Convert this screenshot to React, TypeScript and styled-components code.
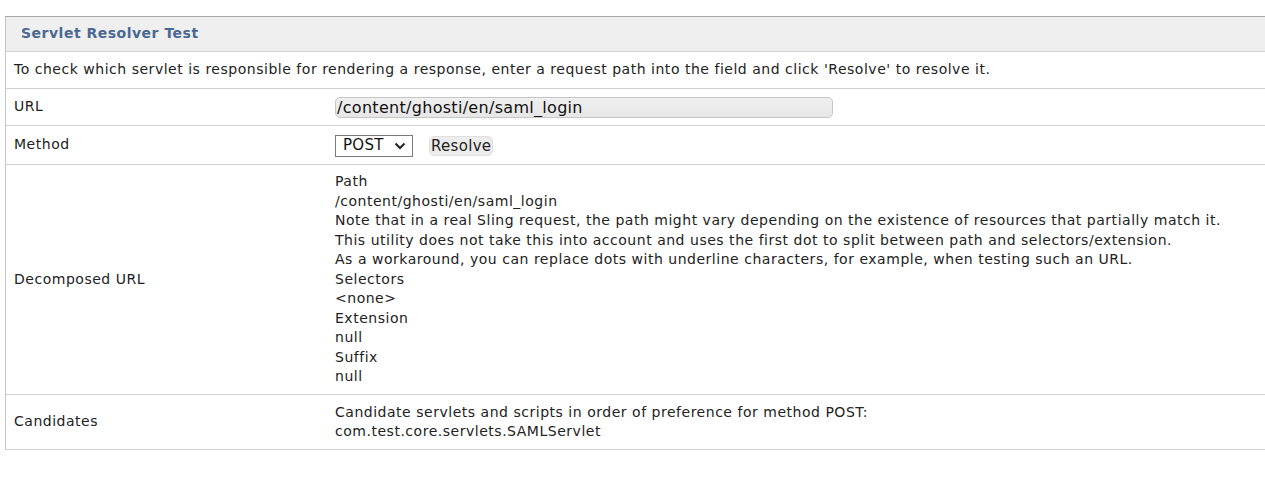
import React from 'react';
import styled, { createGlobalStyle } from 'styled-components';

const C = {
  text: '#222',
  title: '#4a6894',
  headBg: '#efefef',
  outer: '#aaaaaa',
  line: '#d0d0d0',
};

const Global = createGlobalStyle`
  html, body { margin:0; padding:0; background:#fff; }
  body { font-family:'DejaVu Sans',Verdana,sans-serif; color:${C.text}; }
`;

const Page = styled.div`
  padding:16px 0 0 5px;
`;
const Table = styled.table`
  width:1262px; border-collapse:collapse;
  border-top:1px solid ${C.outer}; border-left:1px solid #c4c4c4;
  font-size:14px; letter-spacing:0.52px; line-height:19.5px;
`;
const HeadCell = styled.th`
  background:${C.headBg}; color:${C.title}; text-align:left;
  font-size:14px; letter-spacing:0.5px; font-weight:bold; height:34px; padding:0 15px;
  border-bottom:1px solid ${C.line};
`;
const Row = styled.tr`
  border-bottom:1px solid ${C.line};
`;
const Label = styled.td<{ $h?: number }>`
  width:305px; padding:8px 8px; vertical-align:middle;
  height:${p => (p.$h ? `${p.$h}px` : 'auto')};
`;
const Value = styled.td<{ $top?: number }>`
  padding:${p => p.$top ?? 8}px 8px 7px 8px; vertical-align:middle;
`;
const Wide = styled.td`
  padding:8px 8px 8px; height:20px;
`;
const UrlInput = styled.input`
  box-sizing:border-box; width:498px; height:21px; padding:0 1px;
  font-family:'DejaVu Sans',Verdana,sans-serif; font-size:16px; letter-spacing:0.3px; color:#111;
  border:1px solid #c6c6c6; border-radius:5px;
  background:linear-gradient(#f0f0f0,#e6e6e6);
  outline:none; display:block;
`;
const Controls = styled.div`
  display:flex; align-items:center; gap:16px;
`;
const Select = styled.div`
  box-sizing:border-box; width:78px; height:22px; padding:0 6px 0 7px;
  display:flex; align-items:center; justify-content:space-between;
  border:1px solid #7a7a7a; background:#fff;
  font-size:15px; letter-spacing:0.3px; color:#111;
`;
const Button = styled.button`
  height:20px; padding:0 1px; font-family:'DejaVu Sans',Verdana,sans-serif;
  font-size:15px; letter-spacing:0.3px; color:#222; background:#ececec;
  border:1px solid #e0e0e0; border-radius:5px;
`;
const Lines = styled.div`
  display:flex; flex-direction:column;
`;

const decomposed = [
  'Path',
  '/content/ghosti/en/saml_login',
  'Note that in a real Sling request, the path might vary depending on the existence of resources that partially match it.',
  'This utility does not take this into account and uses the first dot to split between path and selectors/extension.',
  'As a workaround, you can replace dots with underline characters, for example, when testing such an URL.',
  'Selectors',
  '<none>',
  'Extension',
  'null',
  'Suffix',
  'null',
];

export default function App() {
  return (
    <Page>
      <Global />
      <Table>
        <thead>
          <tr><HeadCell colSpan={2}>Servlet Resolver Test</HeadCell></tr>
        </thead>
        <tbody>
          <Row>
            <Wide colSpan={2}>
              To check which servlet is responsible for rendering a response, enter a request path into the field and click 'Resolve' to resolve it.
            </Wide>
          </Row>
          <Row>
            <Label $h={16}>URL</Label>
            <Value><UrlInput defaultValue="/content/ghosti/en/saml_login" /></Value>
          </Row>
          <Row>
            <Label $h={22}>Method</Label>
            <Value>
              <Controls>
                <Select>
                  POST
                  <svg width="12" height="8" viewBox="0 0 12 8">
                    <path d="M1.5 1.5 L6 6 L10.5 1.5" fill="none" stroke="#222" strokeWidth="2" />
                  </svg>
                </Select>
                <Button>Resolve</Button>
              </Controls>
            </Value>
          </Row>
          <Row>
            <Label>Decomposed URL</Label>
            <Value $top={7}>
              <Lines>{decomposed.map((l, i) => <span key={i}>{l}</span>)}</Lines>
            </Value>
          </Row>
          <Row>
            <Label>Candidates</Label>
            <Value>
              <Lines>
                <span>Candidate servlets and scripts in order of preference for method POST:</span>
                <span>com.test.core.servlets.SAMLServlet</span>
              </Lines>
            </Value>
          </Row>
        </tbody>
      </Table>
    </Page>
  );
}
